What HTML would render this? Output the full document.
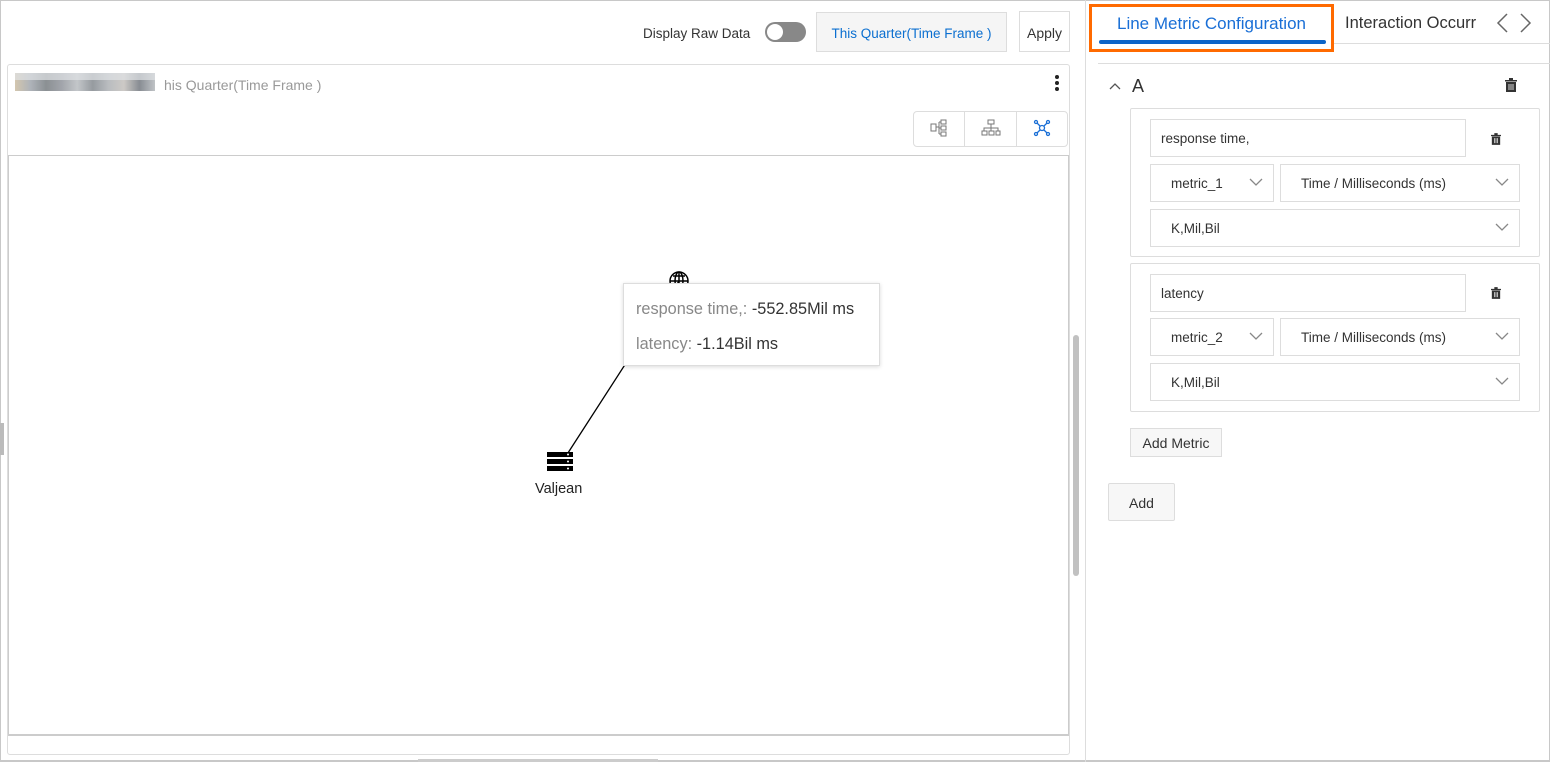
<!DOCTYPE html>
<html><head><meta charset="utf-8"><style>
*{box-sizing:border-box;margin:0;padding:0}
body{width:1550px;height:762px;position:relative;background:#fff;font-family:"Liberation Sans",sans-serif;color:#333;overflow:hidden}
.a{position:absolute}
.box{position:absolute;border:1px solid #ddd;background:#fff}
.sel{position:absolute;border:1px solid #ddd;background:#fff;font-size:13.5px;line-height:37px;padding-left:20px;color:#333}
.chev{position:absolute;right:10px;top:10px;width:14px;height:14px}
.btn{position:absolute;border:1px solid #ddd;background:#f7f7f7;font-size:14px;text-align:center}
</style></head><body>
<div class="a" style="left:0;top:0;width:1550px;height:762px;border:1px solid #c8c8c8;border-bottom:2px solid #c8c8c8"></div>
<!-- top bar -->
<div class="a" style="left:643px;top:26px;font-size:13.5px;color:#333">Display Raw Data</div>
<div class="a" style="left:765px;top:22px;width:41px;height:20px;border-radius:10px;background:#888"></div>
<div class="a" style="left:767px;top:24px;width:16px;height:16px;border-radius:50%;background:#fff"></div>
<div class="btn" style="left:816px;top:12px;width:191px;height:40px;line-height:42px;color:#0b6fd0;font-size:13.5px;background:#f5f5f5">This Quarter(Time Frame )</div>
<div class="btn" style="left:1019px;top:11px;width:51px;height:41px;line-height:42px;background:#fff;font-size:14px">Apply</div>
<!-- card -->
<div class="a" style="left:7px;top:64px;width:1063px;height:691px;border:1px solid #ddd;border-radius:3px"></div>
<div class="a" style="left:15px;top:73px;width:140px;height:18px;background:linear-gradient(90deg,#c8b89a,#9aa0a8,#6e7478,#8a8e96,#b4b8bc,#7c8288,#a8acb0,#c0bcb8,#6a7078,#b0b4b8);opacity:.8"></div>
<div class="a" style="left:15px;top:73px;width:140px;height:7px;background:#e0e2e6;opacity:.7"></div>
<div class="a" style="left:164px;top:77px;font-size:14px;color:#999">his Quarter(Time Frame )</div>
<div class="a" style="left:1055px;top:75px;width:4px;height:4px;border-radius:50%;background:#222;box-shadow:0 6px 0 #222,0 12px 0 #222"></div>
<div class="a" style="left:913px;top:111px;width:155px;height:36px;border:1px solid #ddd;border-radius:4px"></div>
<div class="a" style="left:964px;top:111px;width:1px;height:36px;background:#ddd"></div>
<div class="a" style="left:1016px;top:111px;width:1px;height:36px;background:#ddd"></div>
<svg class="a" style="left:930px;top:119px" width="18" height="18" viewBox="0 0 18 18" fill="none" stroke="#777" stroke-width="1"><rect x="1" y="5" width="5" height="7"/><rect x="11" y="1" width="5" height="4"/><rect x="11" y="7" width="5" height="4"/><rect x="11" y="13" width="5" height="4"/><path d="M6 8h3M9 3v12M9 3h2M9 9h2M9 15h2"/></svg>
<svg class="a" style="left:981px;top:119px" width="20" height="18" viewBox="0 0 20 18" fill="none" stroke="#777" stroke-width="1"><rect x="7" y="1" width="6" height="4"/><rect x="1" y="12" width="5" height="4"/><rect x="8" y="12" width="5" height="4"/><rect x="15" y="12" width="4" height="4"/><path d="M10 5v4M3 12V9h14v3M10 9v3"/></svg>
<svg class="a" style="left:1033px;top:119px" width="18" height="18" viewBox="0 0 18 18" fill="none" stroke="#1a6fd6" stroke-width="1.3"><circle cx="9" cy="9" r="2.5"/><circle cx="3" cy="3" r="1.5"/><circle cx="15" cy="3" r="1.5"/><circle cx="3" cy="15" r="1.5"/><circle cx="15" cy="15" r="1.5"/><path d="M4 4l3 3M14 4l-3 3M4 14l3-3M14 14l-3-3"/></svg>
<div class="a" style="left:8px;top:155px;width:1061px;height:581px;border:1px solid #ccc;border-bottom:2px solid #ccc"></div>
<div class="a" style="left:1073px;top:335px;width:6px;height:241px;border-radius:3px;background:#c1c1c1"></div>
<div class="a" style="left:418px;top:759px;width:240px;height:3px;background:#ccc"></div>
<div class="a" style="left:0;top:423px;width:4px;height:32px;background:#bbb"></div>
<!-- graph -->
<svg class="a" style="left:0;top:0" width="1080" height="762"><line x1="566" y1="456" x2="679" y2="281" stroke="#000" stroke-width="1.3"/>
<g stroke="#000" stroke-width="1.5" fill="none"><circle cx="679" cy="281" r="9"/><path d="M670 281h18M679 272v18M673 276h12M673 286h12"/><ellipse cx="679" cy="281" rx="4" ry="9"/></g>
<g fill="#000"><rect x="547" y="452" width="26" height="5"/><rect x="547" y="459" width="26" height="5"/><rect x="547" y="466" width="26" height="5"/></g>
<g fill="#fff"><circle cx="568" cy="454.5" r="1"/><circle cx="568" cy="461.5" r="1"/><circle cx="568" cy="468.5" r="1"/></g></svg>
<div class="a" style="left:535px;top:481px;font-size:14.5px;color:#222">Valjean</div>
<div class="a" style="left:623px;top:283px;width:257px;height:83px;background:#fff;border:1px solid #ddd;box-shadow:0 1px 4px rgba(0,0,0,.15);font-size:16.3px;padding:13px 12px">
<div style="line-height:24px"><span style="color:#888">response time,: </span>-552.85Mil ms</div>
<div style="line-height:24px;margin-top:11px"><span style="color:#888">latency: </span>-1.14Bil ms</div></div>
<!-- right panel -->
<div class="a" style="left:1085px;top:0;width:1px;height:762px;background:#ddd"></div>
<div class="a" style="left:1333px;top:43px;width:217px;height:1px;background:#ddd"></div>
<div class="a" style="left:1098px;top:63px;width:452px;height:1px;background:#ddd"></div>
<div class="a" style="left:1089px;top:4px;width:245px;height:48px;border:3px solid #ff6a00"></div>
<div class="a" style="left:1117px;top:14px;font-size:17px;color:#1a6fd6">Line Metric Configuration</div>
<div class="a" style="left:1099px;top:40px;width:227px;height:4px;background:#0b64c8;border-radius:2px"></div>
<div class="a" style="left:1345px;top:14px;font-size:16.5px;color:#333;white-space:nowrap">Interaction Occurr</div>
<svg class="a" style="left:1494px;top:12px" width="40" height="22" fill="none" stroke="#666" stroke-width="1.5"><path d="M13 2L4 11l9 9M27 2l9 9-9 9"/></svg>
<svg class="a" style="left:1109px;top:82px" width="12" height="8" fill="none" stroke="#555" stroke-width="1.3"><path d="M1 7l5-5 5 5"/></svg>
<div class="a" style="left:1132px;top:76px;font-size:18px;color:#333">A</div>
<svg class="a" style="left:1505px;top:78px" width="12" height="14" viewBox="0 0 12 14"><path d="M0 2h12v1.5H0zM4 0h4v2H4zM1 4h10v10H1z" fill="#333"/><path d="M4 6v6M6 6v6M8 6v6" stroke="#fff" stroke-width=".8"/></svg>
<div class="box" style="left:1130px;top:108px;width:410px;height:149px;border-radius:2px"></div>
<div class="box" style="left:1150px;top:119px;width:316px;height:38px;font-size:13.5px;line-height:38px;padding-left:10px">response time,</div>
<svg class="a" style="left:1491px;top:133px" width="10" height="12" viewBox="0 0 12 14"><path d="M0 2h12v1.5H0zM4 0h4v2H4zM1 4h10v10H1z" fill="#333"/><path d="M4 6v6M6 6v6M8 6v6" stroke="#fff" stroke-width=".8"/></svg>
<div class="sel" style="left:1150px;top:164px;width:124px;height:38px">metric_1<svg class="chev" viewBox="0 0 14 14" fill="none" stroke="#888" stroke-width="1.3"><path d="M1 4l6 6 6-6"/></svg></div>
<div class="sel" style="left:1280px;top:164px;width:240px;height:38px">Time / Milliseconds (ms)<svg class="chev" viewBox="0 0 14 14" fill="none" stroke="#888" stroke-width="1.3"><path d="M1 4l6 6 6-6"/></svg></div>
<div class="sel" style="left:1150px;top:209px;width:370px;height:38px">K,Mil,Bil<svg class="chev" viewBox="0 0 14 14" fill="none" stroke="#888" stroke-width="1.3"><path d="M1 4l6 6 6-6"/></svg></div>
<div class="box" style="left:1130px;top:263px;width:410px;height:149px;border-radius:2px"></div>
<div class="box" style="left:1150px;top:274px;width:316px;height:38px;font-size:13.5px;line-height:38px;padding-left:10px">latency</div>
<svg class="a" style="left:1491px;top:287px" width="10" height="12" viewBox="0 0 12 14"><path d="M0 2h12v1.5H0zM4 0h4v2H4zM1 4h10v10H1z" fill="#333"/><path d="M4 6v6M6 6v6M8 6v6" stroke="#fff" stroke-width=".8"/></svg>
<div class="sel" style="left:1150px;top:318px;width:124px;height:38px">metric_2<svg class="chev" viewBox="0 0 14 14" fill="none" stroke="#888" stroke-width="1.3"><path d="M1 4l6 6 6-6"/></svg></div>
<div class="sel" style="left:1280px;top:318px;width:240px;height:38px">Time / Milliseconds (ms)<svg class="chev" viewBox="0 0 14 14" fill="none" stroke="#888" stroke-width="1.3"><path d="M1 4l6 6 6-6"/></svg></div>
<div class="sel" style="left:1150px;top:363px;width:370px;height:38px">K,Mil,Bil<svg class="chev" viewBox="0 0 14 14" fill="none" stroke="#888" stroke-width="1.3"><path d="M1 4l6 6 6-6"/></svg></div>
<div class="btn" style="left:1130px;top:428px;width:92px;height:29px;line-height:29px">Add Metric</div>
<div class="btn" style="left:1108px;top:483px;width:67px;height:38px;line-height:38px;border-radius:2px">Add</div>
</body></html>
